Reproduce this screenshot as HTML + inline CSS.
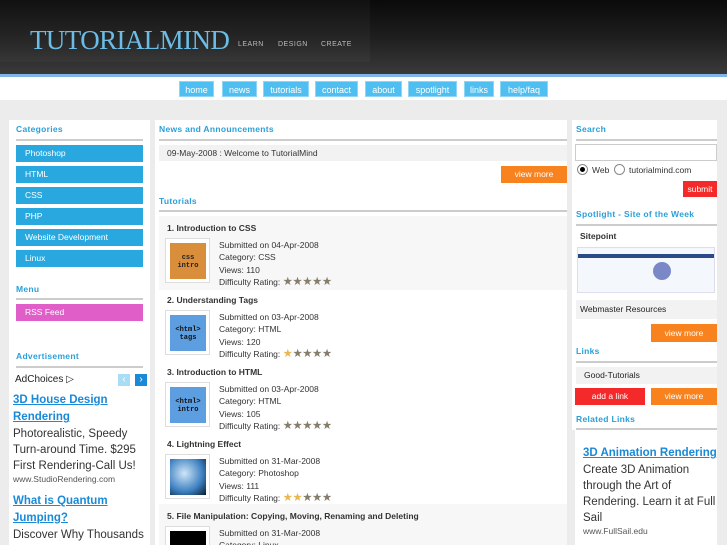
<!DOCTYPE html>
<html style="width:727px;height:545px;overflow:hidden"><head><meta charset="utf-8"><style>
*{margin:0;padding:0;box-sizing:border-box}
body{width:727px;height:545px;overflow:hidden;background:#ececec;font-family:"Liberation Sans","DejaVu Sans",sans-serif;position:relative;font-size:9px;color:#333}
.a{position:absolute}
#hdr{left:0;top:0;width:727px;height:74px;background:linear-gradient(#0a0a0a,#1e1e1e 50%,#3a3a3a)}
#logo{left:30px;top:25px;font-family:"Liberation Serif",serif;font-size:27px;color:#6bbde6;letter-spacing:-0.6px}
.tag{top:41px;font-size:7px;color:#bbb;letter-spacing:0.5px}
#bl{left:0;top:74px;width:727px;height:3px;background:#7fb6e8}
#nav{left:0;top:77px;width:727px;height:23px;background:#fff}
.nb{top:81px;height:16px;background:#4ebff0;color:#fff;font-size:9px;text-align:center;line-height:16px;border:1px solid #8fd6f5}
.panel{background:#fff}
.h{font-size:8.5px;font-weight:bold;color:#2a9fd8;letter-spacing:0.3px}
.ln{height:2px;background:#ccc}
.cat{left:16px;width:127px;height:17px;background:#29a8e0;color:#fff;font-size:8.5px;line-height:17px;padding-left:9px}
.btn{height:17px;color:#fff;font-size:8.5px;text-align:center;line-height:17px}
.or{background:#f7821e}.rd{background:#f42a2a}
.t{font-size:8.5px;font-weight:bold;color:#333}
.im{width:45px;height:45px;border:1px solid #ddd;background:#fff;padding:4px}
.d{font-size:8.5px;color:#333;line-height:12.3px}
.st{color:#857d6a;letter-spacing:-0.5px;font-size:11.5px;line-height:10px}
.gs{color:#e8b850}
.adl{color:#1a8ad8;font-weight:bold;text-decoration:underline;font-size:11.5px;line-height:17px}
.adt{font-size:11.5px;line-height:16px;color:#333}
.adu{font-size:8.5px;color:#555}
</style></head><body>
<div class="a" id="hdr"></div>
<div class="a" style="left:0;top:0;width:370px;height:62px;background:rgba(255,255,255,0.03)"></div>
<div class="a" id="logo">TUTORIALMIND</div>
<div class="a tag" style="left:238px">LEARN</div>
<div class="a tag" style="left:278px">DESIGN</div>
<div class="a tag" style="left:321px">CREATE</div>
<div class="a" id="bl"></div>
<div class="a" id="nav"></div>
<div class="a nb" style="left:179px;width:35px">home</div>
<div class="a nb" style="left:222px;width:35px">news</div>
<div class="a nb" style="left:263px;width:46px">tutorials</div>
<div class="a nb" style="left:315px;width:43px">contact</div>
<div class="a nb" style="left:365px;width:37px">about</div>
<div class="a nb" style="left:408px;width:49px">spotlight</div>
<div class="a nb" style="left:464px;width:30px">links</div>
<div class="a nb" style="left:500px;width:48px">help/faq</div>

<!-- left -->
<div class="a panel" style="left:9px;top:120px;width:141px;height:425px"></div>
<div class="a h" style="left:16px;top:124px">Categories</div>
<div class="a ln" style="left:16px;top:139px;width:127px"></div>
<div class="a cat" style="top:145px">Photoshop</div>
<div class="a cat" style="top:166px">HTML</div>
<div class="a cat" style="top:187px">CSS</div>
<div class="a cat" style="top:208px">PHP</div>
<div class="a cat" style="top:229px">Website Development</div>
<div class="a cat" style="top:250px">Linux</div>
<div class="a h" style="left:16px;top:284px">Menu</div>
<div class="a ln" style="left:16px;top:298px;width:127px"></div>
<div class="a cat" style="top:304px;background:#e05ec8">RSS Feed</div>
<div class="a h" style="left:16px;top:351px">Advertisement</div>
<div class="a ln" style="left:16px;top:366px;width:127px"></div>
<div class="a" style="left:15px;top:374px;font-size:10px;color:#222">AdChoices ▷</div>
<div class="a" style="left:118px;top:374px;width:12px;height:12px;background:#a9dcf5;color:#fff;font-size:10px;text-align:center;line-height:12px">‹</div>
<div class="a" style="left:135px;top:374px;width:12px;height:12px;background:#1a8ad8;color:#fff;font-size:10px;text-align:center;line-height:12px">›</div>
<div class="a" style="left:13px;top:392px;width:140px"><div class="adl">3D House Design Rendering</div><div class="adt">Photorealistic, Speedy Turn-around Time. $295 First Rendering-Call Us!</div><div class="adu">www.StudioRendering.com</div><div class="adl" style="margin-top:9px">What is Quantum Jumping?</div><div class="adt">Discover Why Thousands</div></div>

<!-- middle -->
<div class="a panel" style="left:155px;top:120px;width:412px;height:425px"></div>
<div class="a h" style="left:159px;top:124px">News and Announcements</div>
<div class="a ln" style="left:159px;top:139px;width:408px"></div>
<div class="a" style="left:159px;top:145px;width:408px;height:16px;background:#f2f2f2;font-size:8.5px;line-height:16px;padding-left:8px">09-May-2008 : Welcome to TutorialMind</div>
<div class="a btn or" style="left:501px;top:166px;width:66px">view more</div>
<div class="a h" style="left:159px;top:196px">Tutorials</div>
<div class="a ln" style="left:159px;top:210px;width:408px"></div>
<div class="a" style="left:159px;top:216px;width:408px;height:74px;background:#f7f7f7"></div>
<div class="a" style="left:159px;top:504px;width:408px;height:41px;background:#f7f7f7"></div>

<div class="a t" style="left:167px;top:223px">1. Introduction to CSS</div>
<div class="a im" style="left:165px;top:238px"><div style="width:36px;height:36px;background:#d98e3c;font-family:'Liberation Mono',monospace;font-size:7px;color:#222;text-align:center;padding-top:11px;font-weight:bold">css<br>intro</div></div>
<div class="a d" style="left:219px;top:239px">Submitted on 04-Apr-2008<br>Category: CSS<br>Views: 110<br>Difficulty Rating: <span class="st">★★★★★</span></div>

<div class="a t" style="left:167px;top:295px">2. Understanding Tags</div>
<div class="a im" style="left:165px;top:310px"><div style="width:36px;height:36px;background:#5c9ee0;font-family:'Liberation Mono',monospace;font-size:7px;color:#111;text-align:center;padding-top:11px;font-weight:bold">&lt;html&gt;<br>tags</div></div>
<div class="a d" style="left:219px;top:311px">Submitted on 03-Apr-2008<br>Category: HTML<br>Views: 120<br>Difficulty Rating: <span class="st"><span class="gs">★</span>★★★★</span></div>

<div class="a t" style="left:167px;top:367px">3. Introduction to HTML</div>
<div class="a im" style="left:165px;top:382px"><div style="width:36px;height:36px;background:#5c9ee0;font-family:'Liberation Mono',monospace;font-size:7px;color:#111;text-align:center;padding-top:11px;font-weight:bold">&lt;html&gt;<br>intro</div></div>
<div class="a d" style="left:219px;top:383px">Submitted on 03-Apr-2008<br>Category: HTML<br>Views: 105<br>Difficulty Rating: <span class="st">★★★★★</span></div>

<div class="a t" style="left:167px;top:439px">4. Lightning Effect</div>
<div class="a im" style="left:165px;top:454px"><div style="width:36px;height:36px;background:radial-gradient(circle at 40% 40%,#cfe6f8,#3c7fc0 60%,#0a1a2a)"></div></div>
<div class="a d" style="left:219px;top:455px">Submitted on 31-Mar-2008<br>Category: Photoshop<br>Views: 111<br>Difficulty Rating: <span class="st"><span class="gs">★★</span>★★★</span></div>

<div class="a t" style="left:167px;top:511px">5. File Manipulation: Copying, Moving, Renaming and Deleting</div>
<div class="a im" style="left:165px;top:526px"><div style="width:36px;height:36px;background:#000"></div></div>
<div class="a d" style="left:219px;top:527px">Submitted on 31-Mar-2008<br>Category: Linux</div>

<!-- right -->
<div class="a panel" style="left:572px;top:120px;width:145px;height:310px"></div>
<div class="a h" style="left:576px;top:124px">Search</div>
<div class="a ln" style="left:576px;top:139px;width:141px"></div>
<div class="a" style="left:575px;top:144px;width:142px;height:17px;border:1px solid #ccc;background:#fff"></div>
<div class="a" style="left:577px;top:164px;width:11px;height:11px;border-radius:50%;border:1px solid #888;background:#fff"><div style="margin:2px;width:5px;height:5px;border-radius:50%;background:#000"></div></div>
<div class="a" style="left:592px;top:165px;font-size:8.5px">Web</div>
<div class="a" style="left:614px;top:164px;width:11px;height:11px;border-radius:50%;border:1px solid #888;background:#fff"></div>
<div class="a" style="left:629px;top:165px;font-size:8.5px">tutorialmind.com</div>
<div class="a btn rd" style="left:683px;top:181px;width:34px;height:16px;line-height:16px">submit</div>
<div class="a h" style="left:576px;top:209px">Spotlight - Site of the Week</div>
<div class="a ln" style="left:576px;top:224px;width:141px"></div>
<div class="a t" style="left:580px;top:231px">Sitepoint</div>
<div class="a" style="left:577px;top:247px;width:138px;height:46px;background:#f4f7fb;border:1px solid #dde"><div style="height:4px;margin-top:6px;background:#2a4a8a"></div><div style="position:absolute;left:75px;top:14px;width:18px;height:18px;border-radius:50%;background:#7a88c8"></div></div>
<div class="a" style="left:576px;top:300px;width:141px;height:19px;background:#f2f2f2;font-size:8.5px;line-height:19px;padding-left:4px;color:#222">Webmaster Resources</div>
<div class="a btn or" style="left:651px;top:324px;width:66px;height:18px;line-height:18px">view more</div>
<div class="a h" style="left:576px;top:346px">Links</div>
<div class="a ln" style="left:576px;top:361px;width:141px"></div>
<div class="a" style="left:576px;top:367px;width:141px;height:17px;background:#f2f2f2;font-size:8.5px;line-height:17px;padding-left:8px;color:#222">Good-Tutorials</div>
<div class="a btn rd" style="left:575px;top:388px;width:70px">add a link</div>
<div class="a btn or" style="left:651px;top:388px;width:66px">view more</div>
<div class="a h" style="left:576px;top:414px">Related Links</div>
<div class="a ln" style="left:576px;top:428px;width:141px"></div>
<div class="a" style="left:575px;top:430px;width:142px;height:115px;background:#fff"></div>
<div class="a" style="left:583px;top:445px;width:136px"><div class="adl">3D Animation Rendering</div><div class="adt">Create 3D Animation through the Art of Rendering. Learn it at Full Sail</div><div class="adu">www.FullSail.edu</div></div>
</body></html>
